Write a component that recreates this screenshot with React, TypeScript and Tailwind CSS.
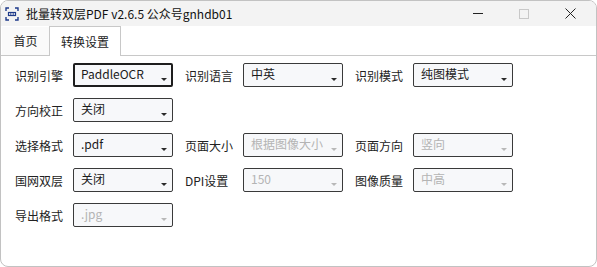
import React from "react";

const FONT = { fontFamily: '"Noto Sans CJK SC", "Microsoft YaHei", sans-serif' };

function Combo({ text, disabled, focused }: { text: string; disabled?: boolean; focused?: boolean }) {
  return (
    <div
      className={
        "relative w-[100px] h-[24px] rounded-[2px] bg-[#f7f8fa] flex items-center overflow-hidden " +
        (focused ? "border-2 border-[#1e1e1e] pl-[6px]" : "border border-[#3a3a3a] pl-[7px]")
      }
    >
      <span className={"text-[12px] leading-none pb-[3px] whitespace-nowrap " + (disabled ? "text-[#b4b4b4]" : "text-[#1a1a1a]")}>
        {text}
      </span>
      <svg
        className={"absolute " + (focused ? "right-[3px] bottom-[3px]" : "right-[4px] bottom-[4px]")}
        width="8"
        height="5"
        viewBox="0 0 8 5"
      >
        <path d="M1 1 H7 L4 4 Z" fill={disabled ? "#b8b8b8" : "#2a2a2a"} />
      </svg>
    </div>
  );
}

function Field({ label, text, disabled, focused }: { label: string; text: string; disabled?: boolean; focused?: boolean }) {
  return (
    <div className="flex items-center w-[158px]">
      <span className="w-[58px] text-[12px] text-[#222] pt-[2px] whitespace-nowrap">{label}</span>
      <Combo text={text} disabled={disabled} focused={focused} />
    </div>
  );
}

export default function App() {
  return (
    <div className="w-[597px] h-[267px] bg-white" style={FONT}>
      <div className="w-full h-full border border-[#c2c2c2] rounded-[8px] overflow-hidden flex flex-col">
        {/* title bar */}
        <div className="h-[25px] bg-[#f3f3f3] flex items-center shrink-0">
          <svg className="ml-[4px]" width="14" height="14" viewBox="0 0 14 14">
            <g fill="none" stroke="#1e3a8a" strokeWidth="1.4">
              <path d="M1 4 V1 H4" />
              <path d="M10 1 H13 V4" />
              <path d="M13 10 V13 H10" />
              <path d="M4 13 H1 V10" />
            </g>
            <rect x="3.5" y="5.5" width="7" height="3" fill="none" stroke="#1e3a8a" strokeWidth="1.2" />
            <rect x="5" y="6.4" width="1.4" height="1.2" fill="#1e3a8a" />
            <rect x="7.6" y="6.4" width="1.4" height="1.2" fill="#1e3a8a" />
          </svg>
          <span className="ml-[7px] text-[12px] text-[#111] whitespace-nowrap">批量转双层PDF v2.6.5 公众号gnhdb01</span>
          <div className="flex-1" />
          <div className="flex items-center">
            <div className="w-[46px] h-[25px] flex items-center justify-center">
              <div className="w-[10px] h-[1px] bg-[#222]" />
            </div>
            <div className="w-[46px] h-[25px] flex items-center justify-center">
              <div className="w-[10px] h-[10px] border border-[#c8c8c8]" />
            </div>
            <div className="w-[46px] h-[25px] flex items-center justify-center mr-[3px]">
              <svg width="11" height="11" viewBox="0 0 11 11">
                <path d="M0.5 0.5 L10.5 10.5 M10.5 0.5 L0.5 10.5" stroke="#222" strokeWidth="1" />
              </svg>
            </div>
          </div>
        </div>
        {/* tabs */}
        <div className="h-[30px] flex items-end pl-[1px] shrink-0 border-b border-[#c8c8c8]">
          <div className="w-[47px] h-[28px] flex items-center justify-center text-[12px] text-[#222] bg-[#fafafa]">
            首页
          </div>
          <div className="relative z-10 -mb-px w-[72px] h-[30px] flex items-center justify-center text-[12px] text-[#222] bg-white border-l border-r border-t border-[#c8c8c8]">
            转换设置
          </div>
        </div>
        {/* content */}
        <div className="flex-1 pt-[7px] pl-[14px] flex flex-col gap-[11px]">
          <div className="flex gap-[12px]">
            <Field label="识别引擎" text="PaddleOCR" focused />
            <Field label="识别语言" text="中英" />
            <Field label="识别模式" text="纯图模式" />
          </div>
          <div className="flex gap-[12px]">
            <Field label="方向校正" text="关闭" />
          </div>
          <div className="flex gap-[12px]">
            <Field label="选择格式" text=".pdf" />
            <Field label="页面大小" text="根据图像大小" disabled />
            <Field label="页面方向" text="竖向" disabled />
          </div>
          <div className="flex gap-[12px]">
            <Field label="国网双层" text="关闭" />
            <Field label="DPI设置" text="150" disabled />
            <Field label="图像质量" text="中高" disabled />
          </div>
          <div className="flex gap-[12px]">
            <Field label="导出格式" text=".jpg" disabled />
          </div>
        </div>
      </div>
    </div>
  );
}
